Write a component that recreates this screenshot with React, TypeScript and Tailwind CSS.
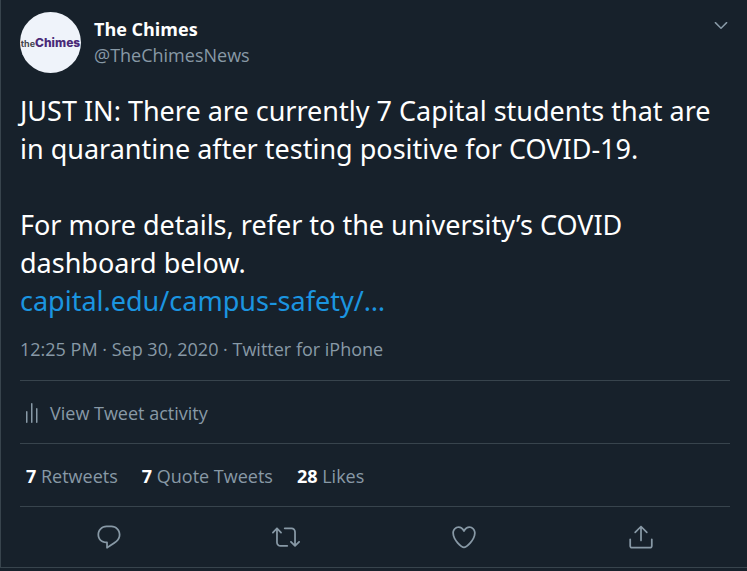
import { type ReactNode } from 'react';

const stats = [
  { count: 7, label: 'Retweets' },
  { count: 7, label: 'Quote Tweets' },
  { count: 28, label: 'Likes' },
];

const actions = [
  {
    label: 'Reply',
    paths: [
      'M14.046 2.242l-4.148-.01h-.002c-4.374 0-7.8 3.427-7.8 7.802 0 4.098 3.186 7.206 7.465 7.37v3.828c0 .108.044.286.12.403.142.225.384.347.632.347.138 0 .277-.038.402-.118.264-.168 6.473-4.14 8.088-5.506 1.902-1.61 3.04-3.97 3.043-6.312v-.017c-.006-4.367-3.43-7.787-7.8-7.788zm3.787 12.972c-1.134.96-4.862 3.405-6.772 4.643V16.67c0-.414-.335-.75-.75-.75h-.396c-3.66 0-6.318-2.476-6.318-5.886 0-3.534 2.768-6.302 6.3-6.302l4.147.01h.002c3.532 0 6.3 2.766 6.302 6.296-.003 1.91-.942 3.844-2.514 5.176z',
    ],
  },
  {
    label: 'Retweet',
    paths: [
      'M23.77 15.67c-.292-.293-.767-.293-1.06 0l-2.22 2.22V7.65c0-2.068-1.683-3.75-3.75-3.75h-5.85c-.414 0-.75.336-.75.75s.336.75.75.75h5.85c1.24 0 2.25 1.01 2.25 2.25v10.24l-2.22-2.22c-.293-.293-.768-.293-1.06 0s-.294.768 0 1.06l3.5 3.5c.145.147.337.22.53.22s.383-.072.53-.22l3.5-3.5c.294-.292.294-.767 0-1.06zm-10.66 3.28H7.26c-1.24 0-2.25-1.01-2.25-2.25V6.46l2.22 2.22c.148.147.34.22.532.22s.384-.073.53-.22c.293-.293.293-.768 0-1.06l-3.5-3.5c-.293-.294-.768-.294-1.06 0l-3.5 3.5c-.294.292-.294.767 0 1.06s.767.293 1.06 0l2.22-2.22V16.7c0 2.068 1.683 3.75 3.75 3.75h5.85c.414 0 .75-.336.75-.75s-.337-.75-.75-.75z',
    ],
  },
  {
    label: 'Like',
    paths: [
      'M12 21.638h-.014C9.403 21.59 1.95 14.856 1.95 8.478c0-3.064 2.525-5.754 5.403-5.754 2.29 0 3.83 1.58 4.646 2.73.814-1.148 2.354-2.73 4.645-2.73 2.88 0 5.404 2.69 5.404 5.755 0 6.376-7.454 13.11-10.037 13.157H12zM7.354 4.225c-2.08 0-3.903 1.988-3.903 4.255 0 5.74 7.034 11.596 8.55 11.658 1.518-.062 8.55-5.917 8.55-11.658 0-2.267-1.823-4.255-3.903-4.255-2.528 0-3.94 2.936-3.952 2.965-.23.562-1.156.562-1.387 0-.014-.03-1.425-2.965-3.954-2.965z',
    ],
  },
  {
    label: 'Share Tweet',
    paths: [
      'M17.53 7.47l-5-5c-.293-.293-.768-.293-1.06 0l-5 5c-.294.293-.294.768 0 1.06s.767.294 1.06 0l3.72-3.72V15c0 .414.336.75.75.75s.75-.336.75-.75V4.81l3.72 3.72c.146.147.338.22.53.22s.384-.072.53-.22c.293-.293.293-.767 0-1.06z',
      'M19.708 21.944H4.292C3.028 21.944 2 20.916 2 19.652V14c0-.414.336-.75.75-.75s.75.336.75.75v5.652c0 .437.355.792.792.792h15.416c.437 0 .792-.355.792-.792V14c0-.414.336-.75.75-.75s.75.336.75.75v5.652c0 1.264-1.028 2.292-2.292 2.292z',
    ],
  },
];

function Avatar() {
  return (
    <div className="flex size-[61px] shrink-0 items-baseline justify-center overflow-hidden rounded-full bg-[#eff3fa] font-['Inter',sans-serif] text-[9px] leading-[62px] font-bold text-[#45464d]">
      <span>the</span>
      <span className="text-[12px] font-extrabold text-[#4a2a78]">Chimes</span>
    </div>
  );
}

function Row({ children }: { children: ReactNode }) {
  return (
    <div className="flex h-[63px] items-center border-t border-[#38444d] pt-0.5">
      {children}
    </div>
  );
}

export default function App() {
  return (
    <main className="min-h-screen bg-[#17212b] font-['Open_Sans',sans-serif] text-[#8899a6]">
      <article className="border-b border-l border-[#38444d] pt-3 pr-[17px] pl-[19px]">
        <header className="flex items-start gap-[13px]">
          <Avatar />
          <div className="flex-1 pt-1 text-[18px] leading-[26px]">
            <h1 className="font-bold text-white">The Chimes</h1>
            <p>@TheChimesNews</p>
          </div>
          <button aria-label="More" className="pt-1">
            <svg viewBox="0 0 24 24" className="size-[18px] fill-current">
              <path d="M20.207 8.147c-.39-.39-1.023-.39-1.414 0L12 14.94 5.207 8.147c-.39-.39-1.023-.39-1.414 0-.39.39-.39 1.023 0 1.414l7.5 7.5c.195.196.45.294.707.294s.512-.098.707-.293l7.5-7.5c.39-.39.39-1.022 0-1.413z" />
            </svg>
          </button>
        </header>

        <div className="pt-[19px] font-['Noto_Sans',sans-serif] text-[27px] leading-[38px] text-white">
          <p>
            JUST IN: There are currently 7 Capital students that are in
            quarantine after testing positive for COVID-19.
          </p>
          <p className="pt-[38px]">
            For more details, refer to the university’s COVID dashboard below.
          </p>
          <a href="#" className="text-[#1b95e0]">
            capital.edu/campus-safety/…
          </a>
        </div>

        <p className="pt-4 pb-[18px] text-[18px] leading-[26px]">
          12:25 PM · Sep 30, 2020 · Twitter for iPhone
        </p>

        <Row>
          <button className="flex items-center gap-2 text-[18px]">
            <svg viewBox="0 0 22 22" className="size-[22px] fill-current">
              <rect x="6" y="9" width="1.5" height="12" rx="0.7" />
              <rect x="11" y="1" width="1.5" height="20" rx="0.7" />
              <rect x="16" y="6" width="1.5" height="15" rx="0.7" />
            </svg>
            View Tweet activity
          </button>
        </Row>

        <Row>
          <div className="flex gap-6 pl-1.5 text-[18px]">
            {stats.map(({ count, label }) => (
              <a key={label} href="#">
                <span className="font-bold text-white">{count}</span> {label}
              </a>
            ))}
          </div>
        </Row>

        <div className="grid h-[61px] grid-cols-4 items-center justify-items-center border-t border-[#38444d]">
          {actions.map(({ label, paths }) => (
            <button key={label} aria-label={label}>
              <svg viewBox="0 0 24 24" className="size-7 fill-current">
                {paths.map(d => (
                  <path key={d} d={d} />
                ))}
              </svg>
            </button>
          ))}
        </div>
      </article>
    </main>
  );
}
